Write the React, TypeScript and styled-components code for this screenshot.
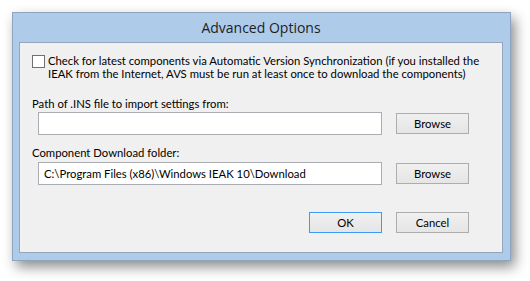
import React from "react";
import styled, { createGlobalStyle } from "styled-components";

const Global = createGlobalStyle`
  html, body { margin: 0; padding: 0; background: #ffffff; }
  body { font-family: "Segoe UI", Lato, sans-serif; }
`;

const Stage = styled.div`
  width: 530px;
  height: 281px;
  padding: 12px 0 0 12px;
  box-sizing: border-box;
  overflow: hidden;
`;

const Window = styled.div`
  width: 499px;
  height: 249px;
  box-sizing: border-box;
  border: 1px solid #8ea4c0;
  background: #afcbea;
  display: flex;
  flex-direction: column;
  padding: 0 7px 7px 6px;
  box-shadow: 4px 6px 12px rgba(0, 0, 0, 0.45);
`;

const TitleBar = styled.div`
  height: 29px;
  display: flex;
  align-items: center;
  justify-content: center;
  font-family: "Open Sans", "Noto Sans", sans-serif;
  font-size: 14px;
  color: #1e1e1e;
  padding-bottom: 1px;
  box-sizing: border-box;
`;

const Client = styled.div`
  flex: 1;
  border: 1px solid #94a6bc;
  background: #f0f0f0;
  padding: 11px 0 0 12px;
  display: flex;
  flex-direction: column;
  font-family: Lato, "Liberation Sans", sans-serif;
  font-size: 11.3px;
  color: #000;
`;

const CheckRow = styled.div`
  display: flex;
  align-items: flex-start;
  gap: 3px;
`;

const CheckBox = styled.div`
  width: 13px;
  height: 13px;
  box-sizing: border-box;
  border: 1px solid #707070;
  background: #fff;
  flex: none;
  margin-top: 1px;
`;

const CheckText = styled.div`
  line-height: 13px;
  white-space: nowrap;
`;

const Label = styled.div<{ $top: number }>`
  margin-top: ${(p) => p.$top}px;
  line-height: 13px;
`;

const FieldRow = styled.div<{ $top: number }>`
  margin-top: ${(p) => p.$top}px;
  display: flex;
  align-items: center;
  padding-left: 6px;
  gap: 14px;
`;

const Input = styled.div`
  width: 344px;
  height: 23px;
  box-sizing: border-box;
  border: 1px solid #abadb3;
  background: #fff;
  display: flex;
  align-items: center;
  padding-left: 5px;
  white-space: nowrap;
`;

const Button = styled.div<{ $default?: boolean }>`
  width: 73px;
  height: 21px;
  box-sizing: border-box;
  border: 1px solid ${(p) => (p.$default ? "#3c9af4" : "#adadad")};
  background: linear-gradient(#f0f0f0, #e5e5e5);
  display: flex;
  align-items: center;
  justify-content: center;
  color: #000;
`;

const ButtonRow = styled.div`
  margin-top: 27px;
  display: flex;
  gap: 14px;
  padding-left: 277px;
`;

export default function App() {
  return (
    <>
      <Global />
      <Stage>
        <Window>
          <TitleBar>Advanced Options</TitleBar>
          <Client>
            <CheckRow>
              <CheckBox />
              <CheckText>
                Check for latest components via Automatic Version Synchronization (if you installed the
                <br />
                IEAK from the Internet, AVS must be run at least once to download the components)
              </CheckText>
            </CheckRow>
            <Label $top={17}>Path of .INS file to import settings from:</Label>
            <FieldRow $top={2}>
              <Input />
              <Button>Browse</Button>
            </FieldRow>
            <Label $top={11}>Component Download folder:</Label>
            <FieldRow $top={3}>
              <Input>C:\Program Files (x86)\Windows IEAK 10\Download</Input>
              <Button>Browse</Button>
            </FieldRow>
            <ButtonRow>
              <Button $default>OK</Button>
              <Button>Cancel</Button>
            </ButtonRow>
          </Client>
        </Window>
      </Stage>
    </>
  );
}
